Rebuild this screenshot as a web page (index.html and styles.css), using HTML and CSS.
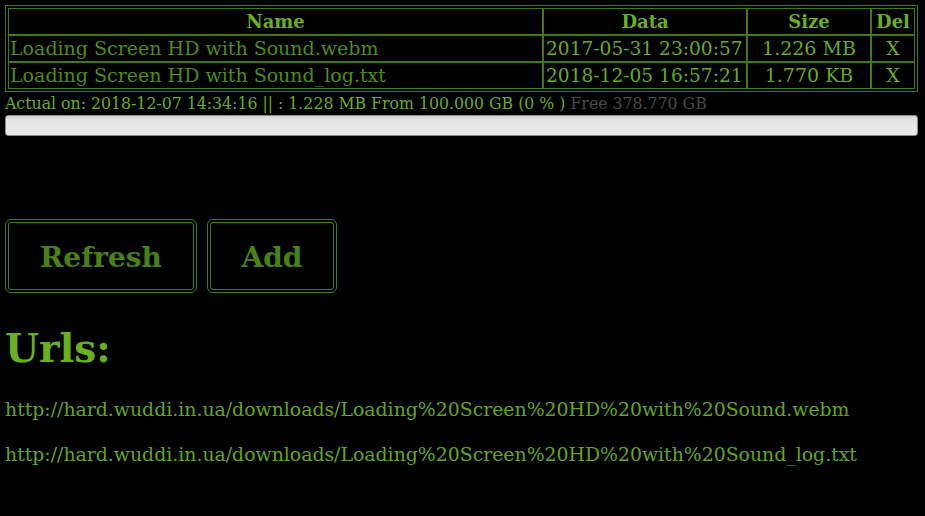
FILE: index.html
```html
<!DOCTYPE html>
<html>
<head>
<meta charset="utf-8">
<title>Files</title>
<link rel="stylesheet" href="styles.css">
</head>
<body>
<table class="files">
  <thead>
    <tr>
      <th class="c-name">Name</th>
      <th class="c-data">Data</th>
      <th class="c-size">Size</th>
      <th class="c-del">Del</th>
    </tr>
  </thead>
  <tbody>
    <tr>
      <td class="name">Loading Screen HD with Sound.webm</td>
      <td class="val date">2017-05-31 23:00:57</td>
      <td class="val center">1.226 MB</td>
      <td class="val center">X</td>
    </tr>
    <tr>
      <td class="name">Loading Screen HD with Sound_log.txt</td>
      <td class="val date">2018-12-05 16:57:21</td>
      <td class="val center">1.770 KB</td>
      <td class="val center">X</td>
    </tr>
  </tbody>
</table>
<div class="status">Actual on: 2018-12-07 14:34:16 || : 1.228 MB From 100.000 GB (0 % ) <span class="free">Free 378.770 GB</span></div>
<div class="progress"><div class="progress-fill" style="width:0%"></div></div>
<div class="actions">
  <button class="btn btn-refresh">Refresh</button>
  <button class="btn btn-add">Add</button>
</div>
<h1 class="urls-title">Urls:</h1>
<p class="url">http://hard.wuddi.in.ua/downloads/Loading%20Screen%20HD%20with%20Sound.webm</p>
<p class="url">http://hard.wuddi.in.ua/downloads/Loading%20Screen%20HD%20with%20Sound_log.txt</p>
</body>
</html>
```
FILE: styles.css
```css
html, body {
  background: #000;
}
body {
  margin: 5px 7px 5px 5px;
  font-family: "DejaVu Serif", serif;
  color: #68ad20;
}
.files {
  width: 100%;
  table-layout: fixed;
  border-collapse: separate;
  border-spacing: 0;
  border: 1px solid #3f7a14;
  padding: 2px;
  font-size: 19px;
}
.files th, .files td {
  box-sizing: border-box;
  border: 1px solid #3f7a14;
  padding: 1px 1px;
  line-height: 23px;
  white-space: nowrap;
}
.files th {
  font-weight: bold;
  font-size: 18px;
  color: #68b020;
  text-align: center;
}
.c-name { width: 535px; }
.c-data { width: 204px; }
.c-size { width: 124px; }
.c-del { width: 44px; }
.files td.name {
  color: #4d8b1a;
  text-align: left;
}
.files td.val {
  color: #68aa1f;
}
.files td.date {
  font-size: 18.6px;
  padding-left: 2px;
}
.files td.center {
  text-align: center;
}
.status {
  font-family: "DejaVu Serif Condensed", "DejaVu Serif", serif;
  font-stretch: condensed;
  font-size: 17.5px;
  line-height: 22px;
  color: #68ad20;
  white-space: nowrap;
}
.free {
  color: #4a4a4a;
}
.progress {
  margin-top: 1px;
  height: 19px;
  border: 1px solid #8a8a8a;
  border-radius: 3px;
  background: linear-gradient(#d6d6d6, #e6e6e6 30%, #e8e8e8);
  overflow: hidden;
}
.progress-fill {
  height: 100%;
  background: #68ad20;
}
.actions {
  display: flex;
  gap: 10px;
  margin-top: 83px;
}
.btn {
  background: #000;
  border: 4px double #3f7f14;
  border-radius: 6px;
  color: #4a8018;
  font-family: "DejaVu Serif", serif;
  font-weight: bold;
  font-size: 28px;
  height: 74px;
  padding: 3px 0 0;
  cursor: pointer;
}
.btn-refresh { width: 192px; }
.btn-add { width: 130px; }
.urls-title {
  margin: 32px 0 0;
  font-size: 39px;
  line-height: 46px;
  font-weight: bold;
  color: #68b020;
}
.url {
  margin: 25px 0 0;
  font-size: 18.85px;
  line-height: 27px;
  color: #62a61e;
}
.url + .url {
  margin-top: 18px;
}
```
